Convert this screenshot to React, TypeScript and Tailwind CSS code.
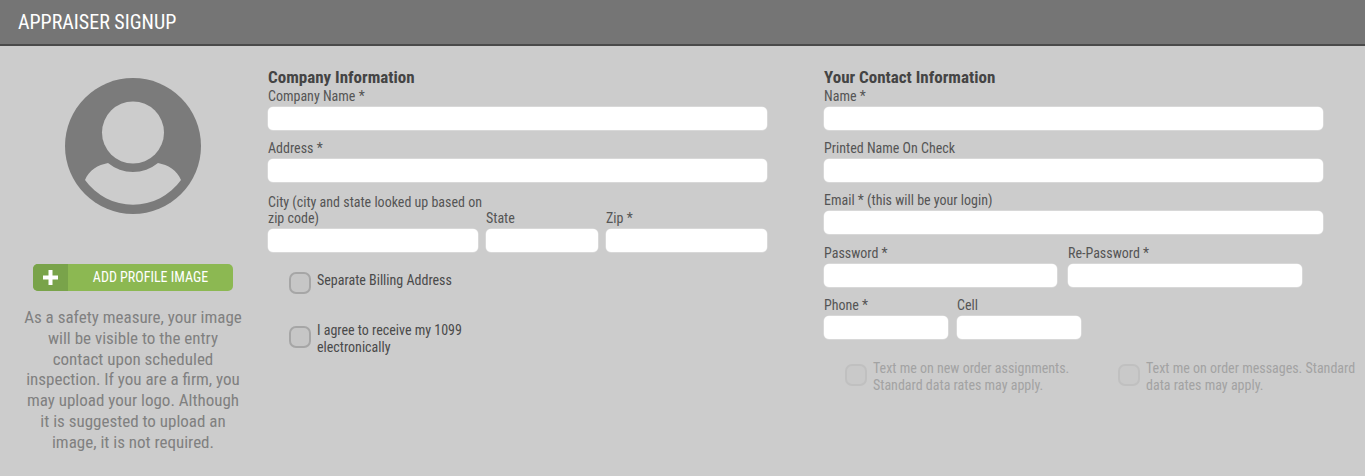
const font = { fontFamily: "Roboto, 'Liberation Sans', sans-serif" }

function Field({ label, className }: { label: React.ReactNode; className: string }) {
  return (
    <div className={className}>
      <label className="block text-[14px] leading-[16px] text-[#555] mb-[3px] whitespace-nowrap">{label}</label>
      <div className="h-[23px] bg-white rounded-[5px] shadow-[0_0_0_0.5px_#e4e4e4]" />
    </div>
  )
}

function Check({ lines, className, muted, boxClass }: { lines: string[]; className: string; muted?: boolean; boxClass?: string }) {
  return (
    <div className={"flex items-start " + className}>
      <div
        className={
          "w-[22px] h-[22px] shrink-0 rounded-[7px] border-2 " +
          (muted ? "border-[#c0c0c0] bg-[#c9c9c9] " : "border-[#a6a6a6] bg-[#c6c6c6] ") +
          (boxClass || "")
        }
      />
      <span className={"ml-[6px] text-[14px] leading-[17px] whitespace-nowrap " + (muted ? "text-[#a3a3a3]" : "text-[#4a4a4a]")}>
        {lines.map((l) => (
          <span key={l} className="block">
            {l}
          </span>
        ))}
      </span>
    </div>
  )
}

export default function App() {
  return (
    <div style={font} className="w-[1365px] h-[476px] overflow-hidden bg-[#cccccc] [font-stretch:75%]">
      <div className="h-[46px] bg-[#757575] border-b-2 border-[#4a4a4a] pl-[18px] flex items-center text-white text-[20px]">
        APPRAISER SIGNUP
      </div>

      <div className="flex">
        {/* Profile image */}
        <div className="w-[268px] pl-[22px] pr-[24px] pt-[32px] flex flex-col items-center">
          <svg width="136" height="136" viewBox="0 0 136 136">
            <circle cx="68" cy="68" r="68" fill="#7b7b7b" />
            <circle cx="68" cy="54.5" r="31" fill="#cccccc" />
            <path
              d="M43 85 A39.4 39.4 0 0 0 93 85 C103 87 112 92 116 102 A59 59 0 0 1 20 102 C24 92 33 87 43 85 Z"
              fill="#cccccc"
            />
          </svg>
          <button className="mt-[50px] w-[200px] h-[27px] flex rounded-[5px] overflow-hidden bg-[#8cb852] text-white">
            <span className="w-[35px] h-full bg-[#79a34a] flex items-center justify-center">
              <svg width="15" height="15" viewBox="0 0 15 15">
                <path d="M5.5 0h4v5.5H15v4H9.5V15h-4V9.5H0v-4h5.5z" fill="#fff" />
              </svg>
            </span>
            <span className="flex-1 text-center text-[14px] leading-[27px] font-normal">ADD PROFILE IMAGE</span>
          </button>
          <p className="mt-[16px] w-[222px] text-center text-[17px] leading-[20.8px] text-[#808080]">
            As a safety measure, your image will be visible to the entry contact upon scheduled inspection. If you are a
            firm, you may upload your logo. Although it is suggested to upload an image, it is not required.
          </p>
        </div>

        {/* Company */}
        <div className="w-[499px] pt-[22px]">
          <h2 className="text-[17px] leading-[18px] font-bold text-[#444] mb-[2px]">Company Information</h2>
          <Field label="Company Name *" className="mb-[10px]" />
          <Field label="Address *" className="mb-[12px]" />
          <div className="flex gap-[8px] items-end">
            <Field
              label={
                <>
                  City (city and state looked up based on
                  <br />
                  zip code)
                </>
              }
              className="w-[210px]"
            />
            <Field label="State" className="w-[112px]" />
            <Field label="Zip *" className="w-[161px]" />
          </div>
          <Check lines={["Separate Billing Address"]} className="mt-[20px] ml-[21px]" />
          <Check lines={["I agree to receive my 1099", "electronically"]} boxClass="mt-[4px]" className="mt-[28px] ml-[21px]" />
        </div>

        {/* Contact */}
        <div className="w-[499px] ml-[57px] pt-[22px]">
          <h2 className="text-[17px] leading-[18px] font-bold text-[#444] mb-[2px]">Your Contact Information</h2>
          <Field label="Name *" className="mb-[10px]" />
          <Field label="Printed Name On Check" className="mb-[10px]" />
          <Field label="Email * (this will be your login)" className="mb-[11px]" />
          <div className="flex gap-[11px] mb-[10px]">
            <Field label="Password *" className="w-[233px]" />
            <Field label="Re-Password *" className="w-[234px]" />
          </div>
          <div className="flex gap-[9px]">
            <Field label="Phone *" className="w-[124px]" />
            <Field label="Cell" className="w-[124px]" />
          </div>
          <div className="flex mt-[21px] ml-[21px] w-[520px]">
            <Check muted lines={["Text me on new order assignments.", "Standard data rates may apply."]} boxClass="mt-[4px]" className="w-[273px]" />
            <Check muted lines={["Text me on order messages. Standard", "data rates may apply."]} boxClass="mt-[4px]" className="w-[247px]" />
          </div>
        </div>
      </div>
    </div>
  )
}
